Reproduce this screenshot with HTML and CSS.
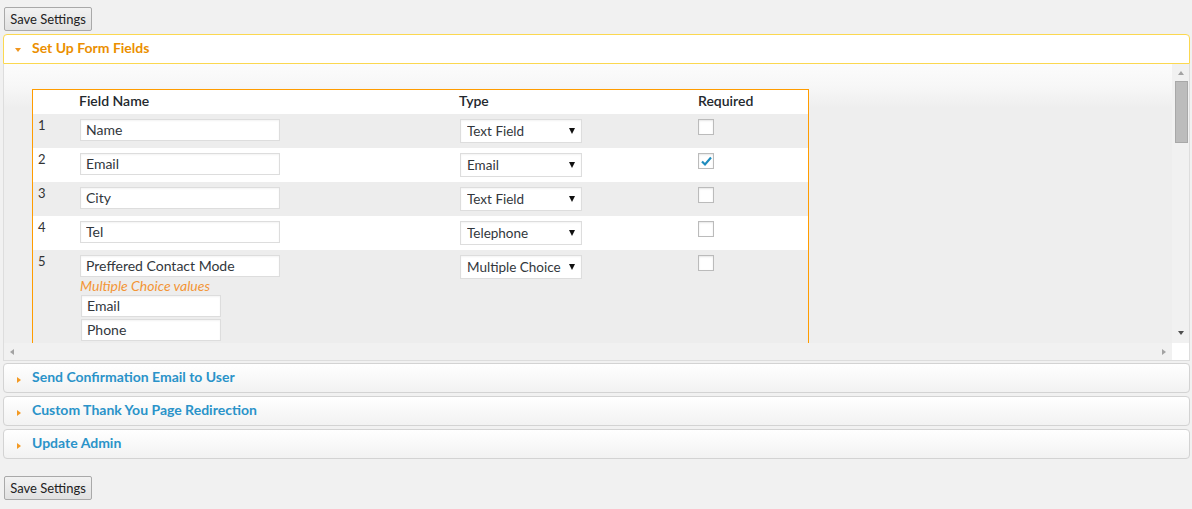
FILE: index.html
```html
<!DOCTYPE html>
<html>
<head>
<meta charset="utf-8">
<link rel="stylesheet" href="styles.css">
</head>
<body>
<div class="page">
  <button class="btn">Save Settings</button>
  <div class="accordion">
    <div class="acc-header active"><span class="icon"><span class="tri-down"></span></span>Set Up Form Fields</div>
    <div class="acc-content">
      <div class="viewport">
        <table class="fields">
          <colgroup><col class="c1"><col class="c2"><col class="c3"><col class="c4"></colgroup>
          <thead>
            <tr><th></th><th>Field Name</th><th>Type</th><th class="req">Required</th></tr>
          </thead>
          <tbody>
            <tr class="odd">
              <td class="num">1</td>
              <td><input class="txt" type="text" value="Name"></td>
              <td><span class="sel"><select><option>Text Field</option></select></span></td>
              <td><span class="cb"></span></td>
            </tr>
            <tr>
              <td class="num">2</td>
              <td><input class="txt" type="text" value="Email"></td>
              <td><span class="sel"><select><option>Email</option></select></span></td>
              <td><span class="cb"><svg width="13" height="13" viewBox="0 0 13 13"><path d="M2 6.5 L5 9.5 L11 2.5" fill="none" stroke="#1e8cbe" stroke-width="2.2" stroke-linejoin="miter"/></svg></span></td>
            </tr>
            <tr class="odd">
              <td class="num">3</td>
              <td><input class="txt" type="text" value="City"></td>
              <td><span class="sel"><select><option>Text Field</option></select></span></td>
              <td><span class="cb"></span></td>
            </tr>
            <tr>
              <td class="num">4</td>
              <td><input class="txt" type="text" value="Tel"></td>
              <td><span class="sel"><select><option>Telephone</option></select></span></td>
              <td><span class="cb"></span></td>
            </tr>
            <tr class="odd">
              <td class="num">5</td>
              <td>
                <input class="txt" type="text" value="Preffered Contact Mode">
                <div class="mc-label">Multiple Choice values</div>
                <input class="txt small" type="text" value="Email">
                <input class="txt small" type="text" value="Phone">
                <input class="txt small" type="text" value="">
              </td>
              <td><span class="sel"><select><option>Multiple Choice</option></select></span></td>
              <td><span class="cb"></span></td>
            </tr>
          </tbody>
        </table>
      </div>
      <div class="vscroll">
        <span class="arr-up"></span>
        <span class="thumb"></span>
        <span class="arr-down"></span>
      </div>
      <div class="hscroll">
        <span class="arr-left"></span>
        <span class="arr-right"></span>
      </div>
      <div class="corner"></div>
    </div>
    <div class="acc-header"><span class="icon"><span class="tri-right"></span></span>Send Confirmation Email to User</div>
    <div class="acc-header"><span class="icon"><span class="tri-right"></span></span>Custom Thank You Page Redirection</div>
    <div class="acc-header"><span class="icon"><span class="tri-right"></span></span>Update Admin</div>
  </div>
  <button class="btn bottom">Save Settings</button>
</div>
</body>
</html>
```
FILE: styles.css
```css
html, body {
  margin: 0;
  padding: 0;
  background: #f1f1f1;
}
body {
  font-family: Lato, "Open Sans", "DejaVu Sans", sans-serif;
  font-size: 14px;
  color: #333;
}
.page {
  padding: 7px 2px 0 3px;
}
.btn {
  display: block;
  margin-left: 1px;
  width: 88px;
  height: 24px;
  padding: 0 0 1px 0;
  font-family: Lato, "Open Sans", sans-serif;
  font-size: 13px;
  color: #222;
  background: linear-gradient(#f2f2f2, #e1e1e1);
  border: 1px solid #a9a9a9;
  border-radius: 2px;
}
.btn.bottom {
  margin-top: 17px;
}
.accordion {
  margin-top: 3px;
}
.acc-header {
  box-sizing: border-box;
  height: 30px;
  display: flex;
  align-items: center;
  padding-left: 11px;
  padding-bottom: 3px;
  border: 1px solid #d3d3d3;
  border-radius: 4px;
  background: linear-gradient(#ffffff, #f2f2f2);
  color: #2a93c9;
  font-weight: bold;
  font-size: 14px;
  margin-top: 3px;
}
.acc-header.active {
  margin-top: 0;
  border-color: #fbd850;
  border-radius: 4px 4px 0 0;
  background: #fff;
  color: #eb8f00;
}
.acc-content + .acc-header {
  margin-top: 2px;
}
.icon {
  width: 17px;
  display: flex;
  align-items: center;
}
.tri-down {
  width: 0;
  height: 0;
  border-left: 3px solid transparent;
  border-right: 3px solid transparent;
  border-top: 4px solid #f0961e;
  margin-top: 4px;
}
.tri-right {
  width: 0;
  height: 0;
  margin-left: 2px;
  margin-top: 6px;
  border-top: 3px solid transparent;
  border-bottom: 3px solid transparent;
  border-left: 4px solid #f39a24;
}
.acc-content {
  display: grid;
  grid-template-columns: 1fr 17px;
  grid-template-rows: 279px 17px;
  border: 1px solid #dddddd;
  border-top: 0;
}
.viewport {
  overflow: hidden;
  box-sizing: border-box;
  padding: 25px 0 0 28px;
  background: linear-gradient(#fcfcfc 0, #f7f7f7 22px, #eeeeee 44px, #eeeeee 100%);
}
.fields {
  border: 1px solid #ff9c00;
  border-spacing: 0;
  table-layout: fixed;
  width: 777px;
  background: #fff;
}
.c1 { width: 42px; }
.c2 { width: 380px; }
.c3 { width: 238px; }
.c4 { width: 115px; }
.fields th {
  box-sizing: border-box;
  height: 24px;
  padding: 0 4px 3px 4px;
  text-align: left;
  font-weight: 600;
  color: #23282d;
  font-size: 14px;
  background: #fff;
}
.fields th.req {
  padding-left: 5px;
}
.fields td {
  padding: 5px;
  vertical-align: top;
  background: #fff;
}
.fields tr.odd td {
  background: #ededed;
}
.fields td.num {
  font-size: 13px;
  line-height: 14px;
  color: #333;
  padding-top: 4px;
}
.txt {
  display: block;
  box-sizing: border-box;
  width: 200px;
  height: 22px;
  margin: 0;
  padding: 0 5px 1px 5px;
  border: 1px solid #dddddd;
  background: #fff;
  box-shadow: inset 0 1px 2px rgba(0, 0, 0, 0.05);
  font-family: Lato, "Open Sans", sans-serif;
  font-size: 14px;
  color: #32373c;
  outline: none;
}
.txt.small {
  width: 140px;
  margin-left: 1px;
  margin-bottom: 2px;
}
.mc-label {
  font-style: italic;
  color: #f39536;
  line-height: 17px;
  height: 18px;
}
.sel {
  position: relative;
  display: inline-block;
  vertical-align: top;
}
.sel select {
  -webkit-appearance: none;
  appearance: none;
  width: 122px;
  height: 24px;
  margin: 0;
  padding: 0 0 1px 6px;
  border: 1px solid #dddddd;
  border-radius: 0;
  background: #fff;
  box-shadow: inset 0 1px 2px rgba(0, 0, 0, 0.05);
  font-family: Lato, "Open Sans", sans-serif;
  font-size: 13.5px;
  color: #32373c;
  outline: none;
}
.sel::after {
  content: "";
  position: absolute;
  right: 7px;
  top: 9px;
  width: 0;
  height: 0;
  border-left: 3.5px solid transparent;
  border-right: 3.5px solid transparent;
  border-top: 6px solid #111;
  pointer-events: none;
}
.cb {
  display: flex;
  align-items: center;
  justify-content: center;
  box-sizing: border-box;
  width: 16px;
  height: 16px;
  border: 1px solid #bbbbbb;
  background: #fff;
  box-shadow: inset 0 1px 2px rgba(0, 0, 0, 0.1);
}
.vscroll {
  background: #f1f1f1;
  display: flex;
  flex-direction: column;
  align-items: center;
}
.arr-up {
  margin-top: 7px;
  width: 0;
  height: 0;
  border-left: 3.5px solid transparent;
  border-right: 3.5px solid transparent;
  border-bottom: 4px solid #a3a3a3;
}
.thumb {
  margin-top: 6px;
  box-sizing: border-box;
  width: 13px;
  height: 62px;
  margin-left: 2px;
  background: #bcbcbc;
  border: 1px solid #a8a8a8;
}
.arr-down {
  margin-top: auto;
  margin-bottom: 8px;
  width: 0;
  height: 0;
  border-left: 3.5px solid transparent;
  border-right: 3.5px solid transparent;
  border-top: 4px solid #505050;
}
.hscroll {
  background: #f1f1f1;
  display: flex;
  align-items: center;
  justify-content: space-between;
  padding: 0 6px;
}
.arr-left {
  width: 0;
  height: 0;
  border-top: 3px solid transparent;
  border-bottom: 3px solid transparent;
  border-right: 4px solid #a3a3a3;
}
.arr-right {
  width: 0;
  height: 0;
  border-top: 3px solid transparent;
  border-bottom: 3px solid transparent;
  border-left: 4px solid #a3a3a3;
}
.corner {
  background: #ffffff;
}
```
